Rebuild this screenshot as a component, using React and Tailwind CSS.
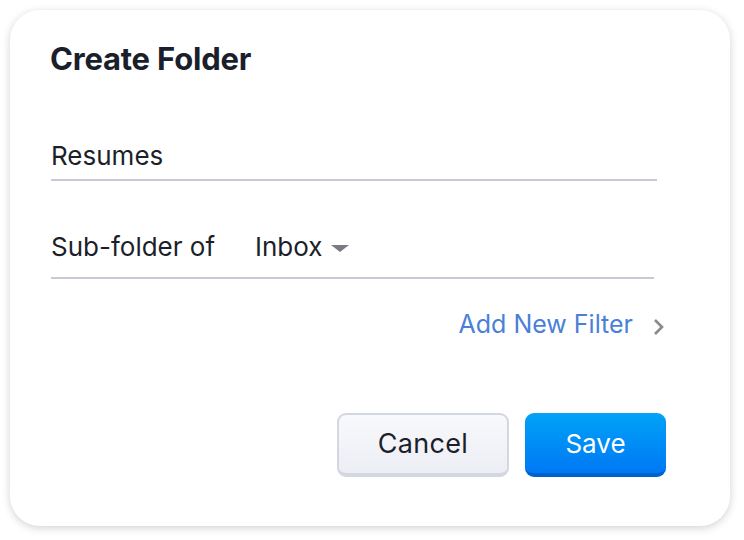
import React from 'react';

const font = { fontFamily: 'Inter, "Noto Sans", sans-serif' };

export default function App() {
  return (
    <div className="w-[744px] h-[540px] bg-white p-[10px]" style={font}>
      <div className="w-[720px] h-[516px] rounded-[30px] bg-white shadow-[0_2px_8px_rgba(0,0,0,0.18)] pl-[41px] pt-[31px] pr-[64px]">
        <h1 className="text-[31px] leading-[36px] font-bold text-[#1b1e2b] tracking-[-0.2px] -ml-[1px]">Create Folder</h1>

        <div className="mt-[64px] w-[606px] border-b-2 border-[#c5cad5] pb-[8px]">
          <div className="text-[26px] leading-[30px] text-[#1c1f2b]">Resumes</div>
        </div>

        <div className="mt-[51px] flex">
          <div className="w-[202px] border-b-2 border-[#c5cad5] pb-[15px] text-[26px] leading-[30px] text-[#1c1f2b]">
            Sub-folder of
          </div>
          <div className="w-[401px] border-b-2 border-[#c5cad5] pb-[15px] pl-[2px] flex items-center text-[26px] leading-[30px] text-[#1c1f2b]">
            Inbox
            <svg className="ml-[9px] mt-[2px]" width="18" height="7" viewBox="0 0 18 7">
              <path d="M0 0 L18 0 L9 7 Z" fill="#7a7c82" />
            </svg>
          </div>
        </div>

        <div className="mt-[30px] flex justify-end items-center">
          <span className="text-[25px] leading-[30px] text-[#4b7fd8]">Add New Filter</span>
          <svg className="ml-[19px] mt-[6px]" width="14" height="20" viewBox="0 0 14 20">
            <path d="M3 3 L10 10 L3 17" fill="none" stroke="#8a8a8e" strokeWidth="2.6" />
          </svg>
        </div>

        <div className="mt-[74px] flex justify-end gap-[16px]">
          <button className="w-[172px] h-[64px] rounded-[9px] border-2 border-b-[4px] border-[#d3d7e1] bg-gradient-to-b from-[#f8f9fc] to-[#eceef4] text-[27px] tracking-[0.3px] text-[#1c1f2b]">
            Cancel
          </button>
          <button className="w-[141px] h-[64px] rounded-[9px] border-b-[4px] border-[#0062cc] bg-gradient-to-b from-[#03a2f6] to-[#0078f5] text-[26px] text-white">
            Save
          </button>
        </div>
      </div>
    </div>
  );
}
